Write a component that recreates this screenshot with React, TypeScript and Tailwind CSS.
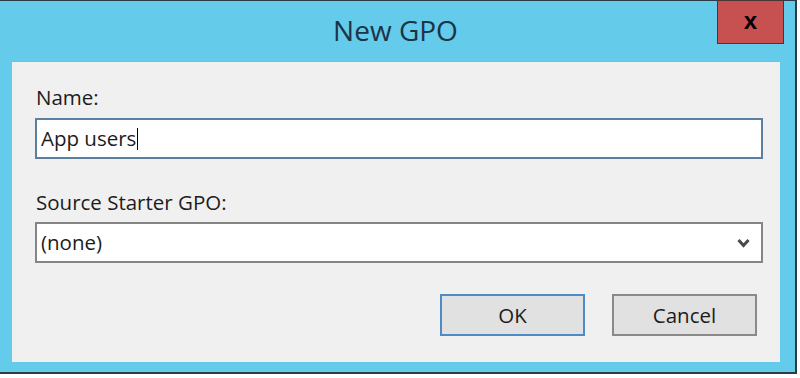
export default function App() {
  return (
    <div className="w-[800px] h-[378px] bg-white overflow-hidden font-['Open_Sans',sans-serif] text-[#1c1c1c]">
      {/* Window frame */}
      <div className="relative w-[797px] h-[374px] bg-[#65cbea] border-t border-r-2 border-b-2 border-[#2d3b44]">
        {/* Title bar */}
        <div className="h-[60px] flex items-center justify-center">
          <h1 className="text-[28px] leading-none text-[#1b3447] -mt-[2px] ml-[-4px]">New GPO</h1>
        </div>

        {/* Close button */}
        <button className="absolute -top-px right-[11px] w-[67px] h-[44px] bg-[#c75050] border border-[#4a3434] flex items-center justify-center">
          <span className="font-['Liberation_Sans',sans-serif] font-bold text-[24px] leading-none text-black -mt-[3px]">x</span>
        </button>

        {/* Body */}
        <div className="ml-[12px] w-[768px] h-[301px] bg-[#f0f0f0] border-t border-[#8db6cc] pl-[23px] pt-[22px]">
          <label className="block ml-px text-[20.5px] leading-[26px]">Name:</label>
          <div className="mt-[8px] w-[728px] h-[41px] bg-white border-2 border-[#5a7fa0] flex items-center pl-[4px]">
            <span className="text-[20.5px] leading-none">App users</span>
            <span className="w-px h-[22px] bg-black ml-px" />
          </div>

          <label className="block ml-px mt-[30px] text-[20.5px] leading-[26px]">Source Starter GPO:</label>
          <div className="mt-[7px] w-[728px] h-[41px] bg-white border-2 border-[#858585] flex items-center justify-between pl-[4px] pr-[11px]">
            <span className="text-[20.5px] leading-none">(none)</span>
            <svg width="13" height="10" viewBox="0 0 13 10">
              <path d="M1.5 2 L6.5 7.5 L11.5 2" fill="none" stroke="#4a4a4a" strokeWidth="3" />
            </svg>
          </div>

          <div className="mt-[31px] mr-[23px] flex justify-end gap-[27px]">
            <button className="w-[145px] h-[42px] bg-[#e1e1e1] border-2 border-[#4b8cc6] text-[20.5px] leading-none">
              OK
            </button>
            <button className="w-[145px] h-[42px] bg-[#e1e1e1] border-2 border-[#8a8a8a] text-[20.5px] leading-none">
              Cancel
            </button>
          </div>
        </div>
      </div>
    </div>
  );
}
